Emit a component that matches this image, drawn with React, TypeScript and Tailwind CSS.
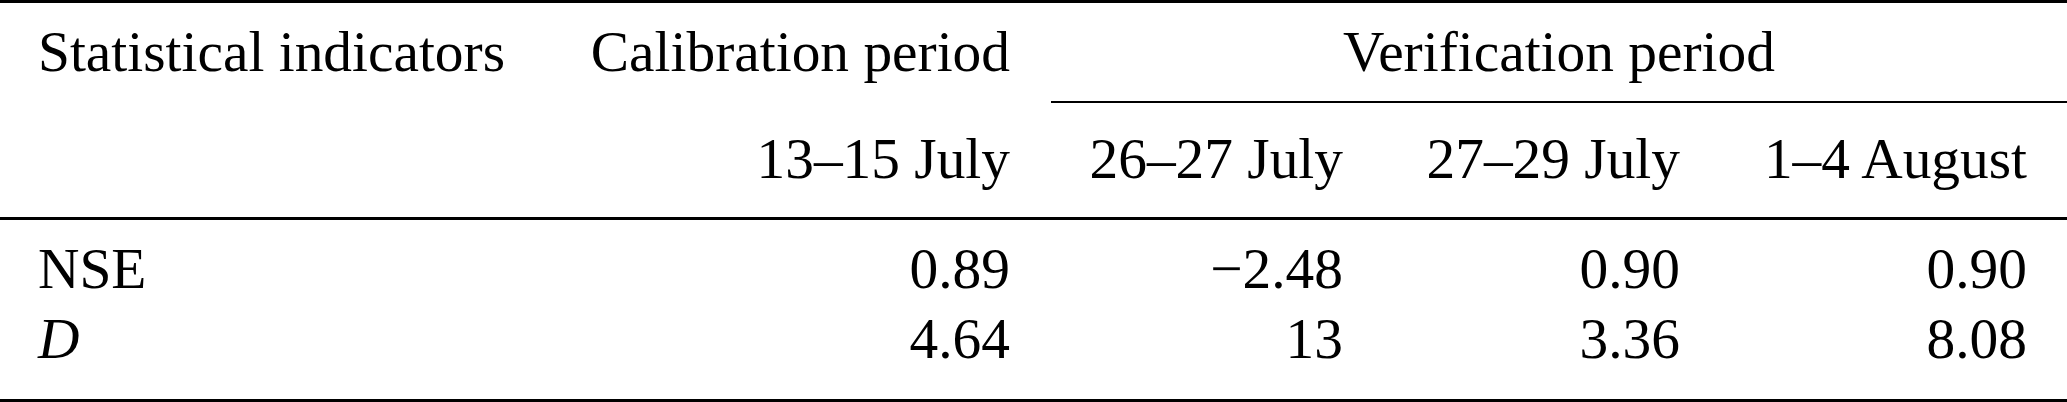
const cols = 'grid grid-cols-[547px_504px_333px_337px_346px]';

const rows = [
  { label: 'NSE', italic: false, values: ['0.89', '−2.48', '0.90', '0.90'] },
  { label: 'D', italic: true, values: ['4.64', '13', '3.36', '8.08'] },
];

function Cell({ children, last }: { children?: React.ReactNode; last?: boolean }) {
  return <div className={`text-right whitespace-nowrap ${last ? 'pr-[40px]' : 'pr-[41px]'}`}>{children}</div>;
}

export default function App() {
  return (
    <div className="w-[2067px] h-[402px] bg-white text-black font-['Liberation_Serif','Times_New_Roman',serif] text-[57.4px] leading-none">
      {/* top rule */}
      <div className="h-[3px] bg-black" />

      {/* header row 1 */}
      <div className={`${cols} h-[98px] pt-[20px]`}>
        <div className="pl-[38px] whitespace-nowrap">Statistical indicators</div>
        <Cell>Calibration period</Cell>
        <div className="col-span-3 text-center whitespace-nowrap">Verification period</div>
      </div>

      {/* partial rule under Verification period */}
      <div className={`${cols} h-[2px]`}>
        <div className="col-start-3 col-span-3 bg-black" />
      </div>

      {/* header row 2 */}
      <div className={`${cols} h-[114px] pt-[27px]`}>
        <div />
        <Cell>13–15 July</Cell>
        <Cell>26–27 July</Cell>
        <Cell>27–29 July</Cell>
        <Cell last>1–4 August</Cell>
      </div>

      {/* mid rule */}
      <div className="h-[3px] bg-black" />

      {rows.map(r => (
        <div key={r.label} className={`${cols} h-[70px] pt-[20px]`}>
          <div className={`pl-[38px] ${r.italic ? 'italic' : ''}`}>{r.label}</div>
          {r.values.map((v, i) => (
            <Cell key={i} last={i === r.values.length - 1}>{v}</Cell>
          ))}
        </div>
      ))}

      <div className="h-[39px]" />

      {/* bottom rule */}
      <div className="h-[3px] bg-black" />
    </div>
  );
}
